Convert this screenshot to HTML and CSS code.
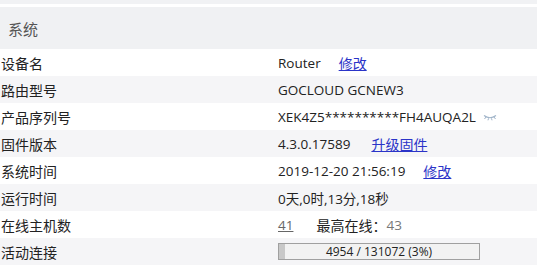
FILE: index.html
```html
<!DOCTYPE html>
<html lang="zh">
<head>
<meta charset="utf-8">
<link rel="stylesheet" href="styles.css">
</head>
<body>
<div class="top-strip"></div>
<div class="panel">
  <div class="panel-head">系统</div>
  <div class="rows">
    <div class="row"><div class="label">设备名</div><div class="value">Router<a class="link">修改</a></div></div>
    <div class="row alt"><div class="label">路由型号</div><div class="value">GOCLOUD GCNEW3</div></div>
    <div class="row"><div class="label">产品序列号</div><div class="value">XEK4Z5**********FH4AUQA2L<svg class="eye" width="14" height="7" viewBox="0 0 14 7"><path d="M1 1.5 Q7 6 13 1.5" fill="none" stroke="#9fb3c8" stroke-width="1.2"/><path d="M3 3 L1.5 5 M5.5 4.3 L5 6.3 M8.5 4.3 L9 6.3 M11 3 L12.5 5" stroke="#9fb3c8" stroke-width="1"/></svg></div></div>
    <div class="row alt"><div class="label">固件版本</div><div class="value">4.3.0.17589<a class="link wide">升级固件</a></div></div>
    <div class="row"><div class="label">系统时间</div><div class="value">2019-12-20 21:56:19<a class="link">修改</a></div></div>
    <div class="row alt"><div class="label">运行时间</div><div class="value">0天,0时,13分,18秒</div></div>
    <div class="row"><div class="label">在线主机数</div><div class="value"><a class="count">41</a><span class="peak">最高在线：</span><span class="muted">43</span></div></div>
    <div class="row alt"><div class="label">活动连接</div><div class="value"><div class="bar"><div class="bar-fill" style="width:3%"></div><span class="bar-text">4954 / 131072 (3%)</span></div></div></div>
  </div>
</div>
</body>
</html>
```
FILE: styles.css
```css
html, body {
  margin: 0;
  padding: 0;
  background: #fff;
}
body {
  font-family: "Open Sans", "Noto Sans CJK SC", sans-serif;
  font-size: 13.5px;
  color: #222;
  width: 537px;
  height: 279px;
  overflow: hidden;
}
.top-strip {
  height: 4px;
  background: #f1f2f4;
  border-bottom: 3px solid #fff;
}
.panel-head {
  height: 42px;
  background: #f0f1f3;
  color: #555;
  font-size: 15px;
  padding-left: 8px;
  display: flex;
  align-items: center;
  font-family: "Noto Sans CJK SC", sans-serif;
}
.row {
  height: 27px;
  display: flex;
  align-items: center;
  background: #fff;
}
.row.alt {
  background: #f5f5f7;
}
.label {
  width: 278px;
  padding-left: 1px;
  box-sizing: border-box;
  font-family: "Noto Sans CJK SC", sans-serif;
  font-size: 14px;
  color: #222;
}
.value {
  display: flex;
  align-items: center;
  color: #222;
}
.link {
  color: #2b34c8;
  text-decoration: underline;
  margin-left: 18px;
  font-family: "Noto Sans CJK SC", sans-serif;
  font-size: 14px;
}
.link.wide {
  margin-left: 21px;
}
.eye {
  margin-left: 7px;
  margin-top: 2px;
}
.count {
  color: #666;
  text-decoration: underline;
}
.peak {
  margin-left: 23px;
  font-family: "Noto Sans CJK SC", sans-serif;
  font-size: 14px;
  color: #222;
}
.muted {
  color: #777;
}
.bar {
  position: relative;
  width: 200px;
  height: 15px;
  border: 1px solid #a0a0a0;
  background: #f2f2f2;
  display: flex;
  justify-content: center;
  align-items: center;
}
.bar-fill {
  position: absolute;
  left: 0;
  top: 0;
  bottom: 0;
  background: #c8c8c8;
}
.bar-text {
  position: relative;
  font-size: 12px;
  color: #222;
}
```
